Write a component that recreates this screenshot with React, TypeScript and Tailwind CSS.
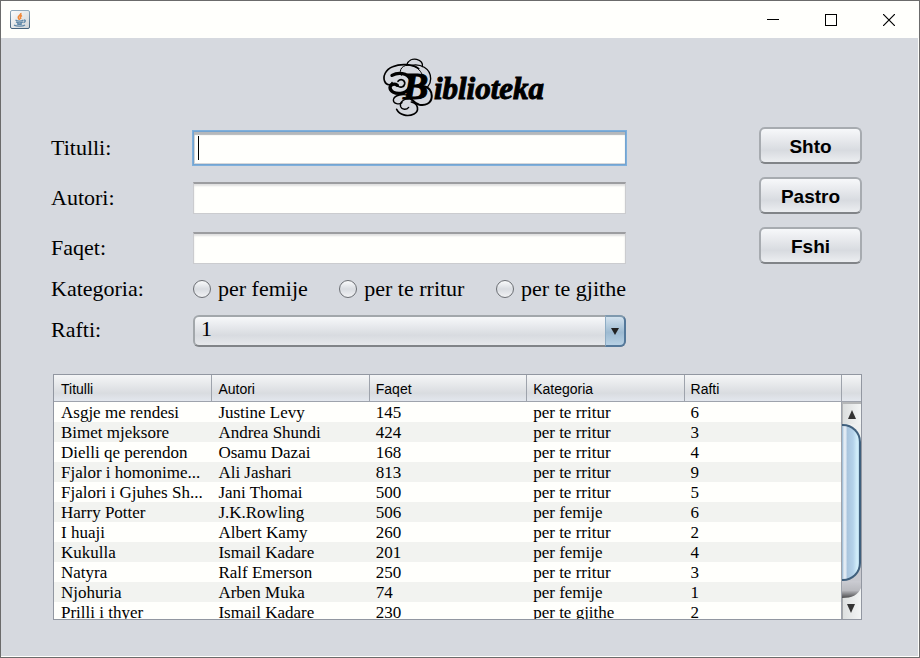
import React from "react";

const serif = "font-['Liberation_Serif',serif]";

const books = [
  ["Asgje me rendesi", "Justine Levy", "145", "per te rritur", "6"],
  ["Bimet mjeksore", "Andrea Shundi", "424", "per te rritur", "3"],
  ["Dielli qe perendon", "Osamu Dazai", "168", "per te rritur", "4"],
  ["Fjalor i homonime...", "Ali Jashari", "813", "per te rritur", "9"],
  ["Fjalori i Gjuhes Sh...", "Jani Thomai", "500", "per te rritur", "5"],
  ["Harry Potter", "J.K.Rowling", "506", "per femije", "6"],
  ["I huaji", "Albert Kamy", "260", "per te rritur", "2"],
  ["Kukulla", "Ismail Kadare", "201", "per femije", "4"],
  ["Natyra", "Ralf Emerson", "250", "per te rritur", "3"],
  ["Njohuria", "Arben Muka", "74", "per femije", "1"],
  ["Prilli i thyer", "Ismail Kadare", "230", "per te gjithe", "2"],
];

const columns = ["Titulli", "Autori", "Faqet", "Kategoria", "Rafti"];
const categories = ["per femije", "per te rritur", "per te gjithe"];

function JavaIcon() {
  return (
    <svg width="20" height="20" viewBox="0 0 20 20" aria-hidden="true">
      <defs>
        <linearGradient id="cup" x1="0" y1="0" x2="1" y2="1">
          <stop offset="0" stopColor="#fdfdfd" />
          <stop offset="1" stopColor="#cfd3d6" />
        </linearGradient>
        <linearGradient id="edge" x1="0" y1="0" x2="0" y2="1">
          <stop offset="0" stopColor="#8fa9bd" />
          <stop offset="1" stopColor="#44617c" />
        </linearGradient>
      </defs>
      <rect x="0.5" y="0.5" width="19" height="18" rx="1.5" fill="url(#cup)" stroke="url(#edge)" />
      <path d="M10.800 3c1 2-3 2.500-2.500 4.500.2 1 1 1.500 1 2.500M12 5.500c-2 1-2 2-1 3.500" fill="none" stroke="#f0883a" strokeWidth="1.600" />
      <path d="M5.500 10.200c2 .9 6 .9 8 0M6 12c2 .9 5 .9 7 0M7 13.800c1.500.6 3.500.6 5 0M14 10c2 0 1.500 2-.5 2.500M4 15.200c3 1.500 9 1.300 11-.3" fill="none" stroke="#5f87a8" strokeWidth="1.300" />
    </svg>
  );
}

function Flourish() {
  return (
    <svg className="absolute left-0 top-0" width="50" height="60" viewBox="39 24 150 180" fill="none" stroke="#000" strokeLinecap="round" aria-hidden="true">
      <path strokeWidth="4" d="M110 46C114 30 128 26 140 28C152 31 159 39 157 50" />
      <path strokeWidth="5" d="M146 56C128 42 92 40 68 50C46 58 38 80 44 94C50 108 64 106 66 98" />
      <path strokeWidth="4" d="M124 46C150 40 182 54 182 86C182 106 168 118 156 120" />
      <path strokeWidth="3" d="M94 76C84 60 98 42 122 46C140 50 150 60 156 72" />
      <path strokeWidth="10" d="M66 76C84 66 112 68 121 88C126 108 114 128 92 130C74 132 60 124 60 112C62 102 74 100 82 106" />
      <path strokeWidth="5" d="M84 94C92 84 106 90 104 102C102 112 90 114 84 108" />
      <path strokeWidth="6" d="M158 108C176 110 187 124 185 142C183 160 166 168 148 164C134 160 126 150 122 146" />
      <path strokeWidth="4" d="M122 138C100 130 72 134 70 150C70 162 88 164 96 158" />
      <path strokeWidth="4" d="M122 146C98 146 88 158 92 170C96 180 110 180 116 172" />
      <path strokeWidth="5" d="M124 156C146 160 148 184 132 192C112 202 88 194 80 178" />
    </svg>
  );
}

function FieldRow({ label, id, active }: { label: string; id: string; active?: boolean }) {
  return (
    <div className="flex h-[50px] items-center">
      <label htmlFor={id} className="w-[142px] shrink-0">{label}</label>
      <div className="relative flex-1">
        <input
          id={id}
          type="text"
          className={
            active
              ? "block h-[34px] w-full border border-[#73a4d1] bg-[#fffffc] px-1 shadow-[inset_0_3px_1px_#b5b8bb,inset_1px_-1px_0_#d5d7da] ring-1 ring-[#7fb0dc] outline-none"
              : "block h-8 w-full border border-t-2 border-[#cbcccf] border-t-[#9c9da0] bg-[#fffffc] px-1 shadow-[inset_0_2px_2px_#e0e0e0] outline-none"
          }
        />
        {active && <span className="absolute left-[5px] top-[5px] h-6 w-px bg-black" />}
      </div>
    </div>
  );
}

function ActionButton({ children }: { children: React.ReactNode }) {
  return (
    <button
      type="button"
      className="h-[37px] rounded-md border-2 border-[#a7abb0] border-b-[#818488] bg-linear-to-b from-[#f7f8fa] via-[#d8dbe0] via-65% to-[#eceef1] pt-0.5 font-['Liberation_Sans',sans-serif] text-[19px] leading-6 font-bold text-black"
    >
      {children}
    </button>
  );
}

function ScrollBar() {
  return (
    <div className="flex min-h-0 flex-1 flex-col bg-[#c8c9cf]">
      <button type="button" aria-label="Scroll up" className="h-[22px] border-t-2 border-l border-[#b5b7b8] bg-linear-to-r from-[#dcdfdf] to-[#f3f5f5]">
        <svg className="mx-auto" width="10" height="9" viewBox="0 0 10 9"><path d="M5 0L9 9H1z" fill="#333" /></svg>
      </button>
      <div className="flex-1 bg-linear-to-b from-[#eef0f0] from-50% to-[#c8c9cf] to-50%">
        <div className="h-full rounded-r-[18px] border-y-2 border-r-2 border-[#3f5f7c] bg-[linear-gradient(90deg,#8fb2cf_0%,#e4ecf4_12%,#dfe9f3_22%,#a9c5de_32%,#b4d2ea_65%,#d3effb_90%,#b3d5ea_100%)]" />
      </div>
      <button type="button" aria-label="Scroll down" className="h-[38px]">
        <svg className="block" width="19" height="38" viewBox="0 0 19 38">
          <defs>
            <linearGradient id="well" x1="0" y1="0" x2="0" y2="1">
              <stop offset="0" stopColor="#cbccd2" />
              <stop offset="0.250" stopColor="#b9babf" />
              <stop offset="0.450" stopColor="#4a4a4c" />
            </linearGradient>
            <linearGradient id="face" x1="0" y1="0" x2="1" y2="0">
              <stop offset="0" stopColor="#dcdfdf" />
              <stop offset="1" stopColor="#f3f5f5" />
            </linearGradient>
          </defs>
          <rect width="19" height="38" fill="url(#well)" />
          <path d="M0 17C10 17 16 14 19 7V38H0z" fill="url(#face)" />
          <path d="M0.500 17V38" stroke="#a5a8aa" />
          <path d="M5 23H13L9 32z" fill="#333" />
        </svg>
      </button>
    </div>
  );
}

export default function App() {
  return (
    <div className={`${serif} flex h-screen flex-col overflow-hidden border border-[#6b6b6b] bg-[#fffffc] pr-px pb-px text-black`}>
      <header className="flex h-[37px] shrink-0 items-center justify-between pl-[9px]">
        <JavaIcon />
        <div className="flex">
          <button type="button" aria-label="Minimize" className="flex h-9 w-[58px] items-center justify-center">
            <svg width="12" height="12"><path d="M0 5.500H12" stroke="#000" /></svg>
          </button>
          <button type="button" aria-label="Maximize" className="flex h-9 w-[58px] items-center justify-center">
            <svg width="12" height="12"><rect x="0.500" y="0.500" width="11" height="11" fill="none" stroke="#000" /></svg>
          </button>
          <button type="button" aria-label="Close" className="flex h-9 w-[58px] items-center justify-center">
            <svg width="12" height="12"><path d="M0 0L12 12M12 0L0 12" stroke="#000" strokeWidth="1.200" /></svg>
          </button>
        </div>
      </header>

      <main className="flex min-h-0 flex-1 flex-col bg-[#d6d9df] pr-14 pb-9 pl-[50px]">
        <div className="flex h-[85px] shrink-0 justify-center pt-5 pl-3.5">
          <h1 className="relative flex h-[60px] items-baseline pt-1 pl-5 leading-[48px] font-bold italic [-webkit-text-stroke:1px_#000]">
            <Flourish />
            <span className="w-[31px] text-[38px]">B</span>
            <span className="text-[31px]">iblioteka</span>
          </h1>
        </div>

        <form className="flex shrink-0 text-[22px] leading-7">
          <div className="flex-1">
            <FieldRow label="Titulli:" id="titulli" active />
            <FieldRow label="Autori:" id="autori" />
            <FieldRow label="Faqet:" id="faqet" />
            <fieldset className="flex h-8 items-center">
              <legend className="float-left w-[142px] shrink-0">Kategoria:</legend>
              <div className="flex flex-1 justify-between">
                {categories.map((name) => (
                  <label key={name} className="flex items-center gap-[7px] whitespace-nowrap">
                    <input
                      type="radio"
                      name="kategoria"
                      className="size-[18px] appearance-none rounded-full border border-[#6c6f74] bg-linear-to-b from-[#fafbfc] via-[#d9dce1] to-[#f1f2f4]"
                    />
                    {name}
                  </label>
                ))}
              </div>
            </fieldset>
            <div className="flex h-[52px] items-center">
              <label htmlFor="rafti" className="w-[142px] shrink-0 pb-0.5">Rafti:</label>
              <div className="relative flex-1">
                <select
                  id="rafti"
                  className="block h-8 w-full appearance-none rounded-md border-2 border-[#a2a7ab] border-b-[#818488] bg-linear-to-b from-[#f7f8fa] via-[#d8dbe0] via-65% to-[#e6e8eb] pb-1 pl-1.5 leading-6"
                >
                  <option>1</option>
                  <option>2</option>
                  <option>3</option>
                </select>
                <span className="pointer-events-none absolute top-0 right-0 flex h-8 w-[21px] items-center justify-center rounded-r-md border-2 border-l border-[#54789a] border-t-[#7f99ae] border-l-[#8eacc4] bg-linear-to-b from-[#d3e2ee] via-[#9dbad1] via-55% to-[#b7d1e5]">
                  <svg width="8" height="7" viewBox="0 0 8 7"><path d="M0 0H8L4 7z" fill="#222" /></svg>
                </span>
              </div>
            </div>
          </div>
          <div className="ml-[133px] flex w-[103px] flex-col gap-[13px] pt-1">
            <ActionButton>Shto</ActionButton>
            <ActionButton>Pastro</ActionButton>
            <ActionButton>Fshi</ActionButton>
          </div>
        </form>

        <section className="mt-[17px] ml-0.5 flex min-h-0 flex-1 border border-[#9297a1]">
          <div className="min-w-0 flex-1 overflow-hidden bg-[#fffffc]">
            <table className="w-full table-fixed border-separate border-spacing-0 text-left">
              <thead className="font-['Liberation_Sans',sans-serif] text-sm leading-6">
                <tr className="h-[27px]">
                  {columns.map((name) => (
                    <th key={name} className="border-b border-l border-[#9ea3ac] bg-linear-to-b from-[#f5f6f7] via-[#d9dce0] via-70% to-[#e3e7ee] p-0 pt-0.5 pl-1.5 font-normal first:border-l-0 first:pl-[7px]">
                      {name}
                    </th>
                  ))}
                </tr>
              </thead>
              <tbody className="text-[17px] leading-[18px]">
                {books.map((row) => (
                  <tr key={row[0]} className="h-5 even:bg-[#f2f3f0]">
                    {row.map((cell, i) => (
                      <td key={i} className="p-0 pt-0.5 pl-[7px] whitespace-nowrap">{cell}</td>
                    ))}
                  </tr>
                ))}
              </tbody>
            </table>
          </div>
          <div className="flex w-5 flex-col border-l border-[#9ea3ac]">
            <div className="h-[27px] shrink-0 border-b border-[#9ea3ac] bg-linear-to-b from-[#f5f6f7] via-[#d9dce0] via-70% to-[#e3e7ee]" />
            <ScrollBar />
          </div>
        </section>
      </main>
    </div>
  );
}
